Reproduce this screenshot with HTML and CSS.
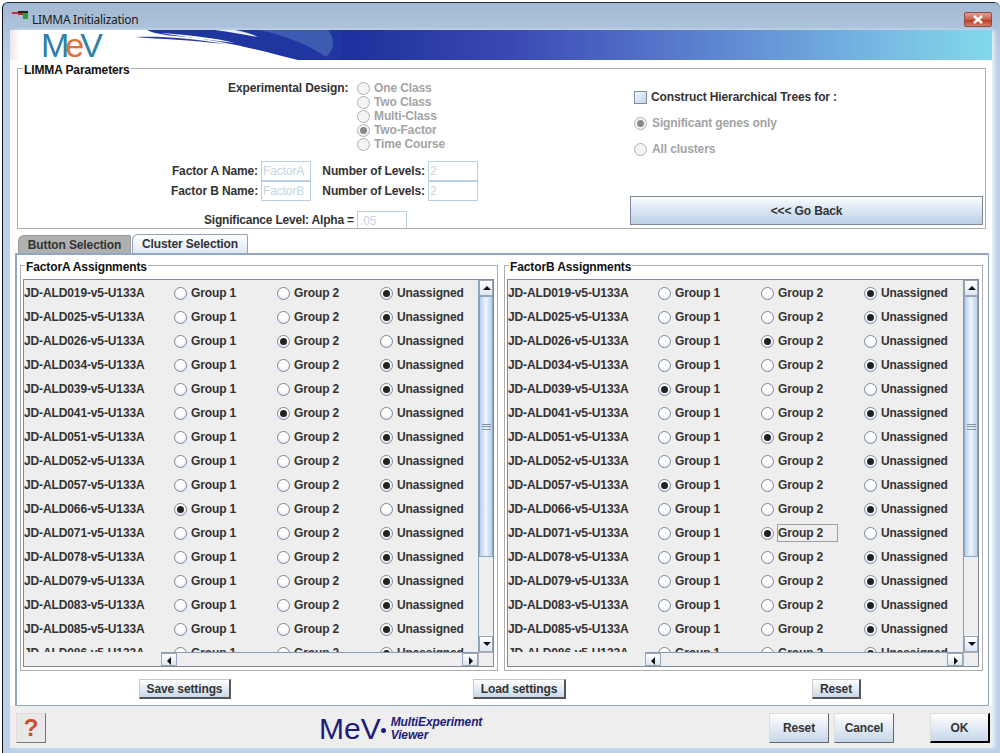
FILE: index.html
```html
<!DOCTYPE html>
<html>
<head>
<meta charset="utf-8">
<title>LIMMA Initialization</title>
<link rel="stylesheet" href="styles.css">
</head>
<body>
<div class="window">
	<div class="titlebar">
		<svg class="appicon" width="17" height="10" viewBox="0 0 17 10"><rect width="6" height="2" y="1" fill="#c0304a"/><rect x="6" y="0" width="10" height="2" fill="#222"/><rect x="6" y="2" width="6" height="2" fill="#a33"/><rect x="11" y="2" width="5" height="6" fill="#2e9a3a"/></svg>
		<span class="title">LIMMA Initialization</span>
		<div class="close"><svg width="12" height="9" viewBox="0 0 12 9"><path d="M2 1l8 7M10 1l-8 7" stroke="#fff" stroke-width="2.4" fill="none"/></svg></div>
	</div>
	<div class="content">
		<div class="banner">
			<svg class="swoosh" width="332" height="30" viewBox="0 0 332 30">
				<path d="M137 0L332 0L332 30L288 30C255 22 215 10 165 6C150 4.5 140 2 137 0Z" fill="#1f36a0"/>
				<path d="M250 0L318 0C326 10 324 20 316 27C298 14 275 6 250 0Z" fill="#4a68b8" opacity=".75"/>
				<path d="M205 0L225 0C235 2 242 4 248 7C235 5 220 2 205 0Z" fill="#e8eefa"/>
				<path d="M150 3C180 5 205 8 225 13C200 10 175 7 150 3Z" fill="#fff"/>
				<path d="M125 7C150 6 180 8 215 14C180 10 150 9 125 7Z" fill="#2a3a90"/>
			</svg>
			<span class="bannerlogo"><span class="mv">M</span><span class="e">e</span><span class="mv">V</span></span>
		</div>
		<div class="main">
			<div class="group params">
				<span class="legend">LIMMA Parameters</span>
				<div class="params-left">
					<div class="design">
						<span class="label design-label">Experimental Design:</span>
						<div class="design-opts">
							<label class="opt off"><i class="radio dis"></i>One Class</label>
							<label class="opt off"><i class="radio dis"></i>Two Class</label>
							<label class="opt off"><i class="radio dis"></i>Multi-Class</label>
							<label class="opt off"><i class="radio dis on"></i>Two-Factor</label>
							<label class="opt off"><i class="radio dis"></i>Time Course</label>
						</div>
					</div>
					<div class="factors">
						<span class="label">Factor A Name:</span><span class="field">FactorA</span>
						<span class="label">Number of Levels:</span><span class="field">2</span>
						<span class="label">Factor B Name:</span><span class="field">FactorB</span>
						<span class="label">Number of Levels:</span><span class="field">2</span>
					</div>
					<div class="alpha">
						<span class="label">Significance Level: Alpha =</span><span class="field">.05</span>
					</div>
				</div>
				<div class="params-right">
					<label class="tree-check"><i class="check"></i>Construct Hierarchical Trees for :</label>
					<label class="opt off tree-opt"><i class="radio dis on"></i>Significant genes only</label>
					<label class="opt off tree-opt"><i class="radio dis"></i>All clusters</label>
					<button class="goback">&lt;&lt;&lt; Go Back</button>
				</div>
			</div>
			<div class="tabs">
				<div class="tab selected">Button Selection</div>
				<div class="tab">Cluster Selection</div>
			</div>
			<div class="tabpanel">
				<div class="assignments">
					<div class="group assign">
						<span class="legend">FactorA Assignments</span>
						<div class="listbox">
							<div class="listmain">
								<div class="rows" id="rowsA"></div>
								<div class="vbar"><div class="sb-btn up"></div><div class="thumb"><span class="grip"></span></div><div class="sb-track"></div><div class="sb-btn down"></div></div>
							</div>
							<div class="hrow">
								<div class="hbar"><div class="sb-btn left"></div><div class="sb-track"></div><div class="sb-btn right"></div></div>
								<div class="corner"></div>
							</div>
						</div>
					</div>
					<div class="group assign">
						<span class="legend">FactorB Assignments</span>
						<div class="listbox">
							<div class="listmain">
								<div class="rows" id="rowsB"></div>
								<div class="vbar"><div class="sb-btn up"></div><div class="thumb"><span class="grip"></span></div><div class="sb-track"></div><div class="sb-btn down"></div></div>
							</div>
							<div class="hrow">
								<div class="hbar"><div class="sb-btn left"></div><div class="sb-track"></div><div class="sb-btn right"></div></div>
								<div class="corner"></div>
							</div>
						</div>
					</div>
				</div>
				<div class="settings">
					<button class="btn save">Save settings</button>
					<button class="btn load">Load settings</button>
					<button class="btn reset-small">Reset</button>
				</div>
			</div>
		</div>
		<div class="footer">
			<button class="help">?</button>
			<div class="mevmark">
				<span class="mevname">MeV</span>
				<span class="mevdot"></span>
				<span class="mevtext">MultiExperiment<br>Viewer</span>
			</div>
			<button class="bigbtn reset">Reset</button>
			<button class="bigbtn cancel">Cancel</button>
			<button class="bigbtn ok">OK</button>
		</div>
	</div>
</div>
<script>
	var samples = ["019","025","026","034","039","041","051","052","057","066","071","078","079","083","085","086"];
	// which column is picked per row: 0 group 1, 1 group 2, 2 unassigned
	var pickA = [2,2,1,2,2,1,2,2,2,0,2,2,2,2,2,2];
	var pickB = [2,2,1,2,0,2,1,2,0,2,1,2,2,2,2,2];
	var names = ["Group 1","Group 2","Unassigned"];

	function fillRows (id, picks, focusRow) {
		var box = document.getElementById(id);
		var html = "";
		for (var i = 0; i < samples.length; i++) {
			html += '<div class="row"><span class="sample">JD-ALD' + samples[i] + '-v5-U133A</span>';
			for (var c = 0; c < 3; c++) {
				var focus = (i == focusRow && c == picks[i]) ? ' focus' : '';
				html += '<label class="cell"><i class="radio' + (picks[i] == c ? ' on' : '') + '"></i><span class="celltext' + focus + '">' + names[c] + '</span></label>';
			}
			html += '</div>';
		}
		box.innerHTML = html;
	}
	fillRows("rowsA", pickA, -1);
	fillRows("rowsB", pickB, 10);
</script>
</body>
</html>
```
FILE: styles.css
```css
* {
	box-sizing: border-box;
	margin: 0;
	padding: 0;
}
html, body {
	width: 1000px;
	height: 753px;
	overflow: hidden;
	background: #fff;
}
body {
	font-family: "Liberation Sans", Arial, sans-serif;
	font-size: 12px;
	font-weight: bold;
	letter-spacing: -0.12px;
	color: #333;
	padding: 2px 0 0 2px;
}
i { display: block; font-style: normal; }
button { font-family: inherit; font-weight: bold; font-size: 12px; letter-spacing: inherit; color: #333; }

.window {
	width: 998px;
	height: 751px;
	border-top: 1px solid #20303f;
	border-left: 1px solid #111;
	border-radius: 6px 6px 0 0;
	background: linear-gradient(#a3b9d3, #bcd1e9 60px);
	display: flex;
	flex-direction: column;
}
.titlebar {
	height: 27px;
	flex: none;
	display: flex;
	align-items: flex-start;
	position: relative;
}
.appicon { margin: 8px 0 0 9px; }
.title {
	font-family: "Noto Sans", sans-serif;
	font-weight: normal;
	font-size: 12px;
	letter-spacing: -0.3px;
	color: #1a1a1a;
	margin: 8px 0 0 3px;
}
.close {
	position: absolute;
	left: 961px;
	top: 9px;
	width: 28px;
	height: 15px;
	border: 1px solid #8c4a48;
	border-radius: 2px;
	background: linear-gradient(#e0a094, #c9604c 50%, #b33c28 55%, #d0806c);
	display: flex;
	align-items: center;
	justify-content: center;
}
.content {
	margin: 0 8px 0 7px;
	flex: none;
	height: 718px;
	background: #eee;
	display: flex;
	flex-direction: column;
	box-shadow: 3px 0 3px rgba(255,255,255,.6);
}
.banner {
	height: 30px;
	flex: none;
	position: relative;
	background: linear-gradient(90deg, #e8e8e8 0, #fff 10px, #fff 330px, #1d2f9c 330px, #3a48b4 500px, #5d84d0 700px, #78bce4 880px, #82d8ea 980px);
}
.swoosh { position: absolute; left: 0; top: 0; }
.bannerlogo {
	position: absolute;
	left: 31px;
	top: 0;
	font-weight: normal;
	font-size: 34px;
	letter-spacing: -4px;
	line-height: 30px;
}
.mv { color: #2f7fa8; }
.e { color: #e2703a; }

.main {
	flex: none;
	background: #fff;
	height: 646px;
	padding: 8px 0 0 5px;
}
.group {
	border: 1px solid #aeaeae;
	position: relative;
}
.legend {
	position: absolute;
	left: 4px;
	top: -6px;
	height: 14px;
	line-height: 14px;
	padding: 0 1px;
	background: #fff;
	color: #111;
}
.params {
	width: 969px;
	margin-left: 2px;
	height: 161px;
	display: flex;
}
.params .legend { left: 5px; }
.params-left {
	width: 612px;
	height: 159px;
	overflow: hidden;
	flex: none;
}
.label { white-space: nowrap; }
.design {
	display: flex;
	padding-top: 12px;
	height: 92px;
}
.design-label { margin-left: 210px; width: 129px; line-height: 14px; }
.opt {
	display: flex;
	align-items: center;
	height: 14px;
}
.off { color: #a3a3a3; }
.radio {
	width: 13px;
	height: 13px;
	border-radius: 50%;
	border: 1px solid #7d8a98;
	background: radial-gradient(circle at 50% 35%, #fff 40%, #d2dff0);
	margin-right: 4px;
	flex: none;
	position: relative;
}
.radio.on::after {
	content: "";
	position: absolute;
	left: 2px;
	top: 2px;
	width: 7px;
	height: 7px;
	border-radius: 50%;
	background: #222;
}
.radio.dis {
	border-color: #b0b0b0;
	background: #f4f4f4;
}
.radio.dis.on::after { background: #8a8a8a; }

.factors {
	display: grid;
	grid-template-columns: 90px 50px 117px 50px;
	grid-auto-rows: 20px;
	margin-left: 153px;
	align-items: center;
}
.factors .label { text-align: right; padding-right: 3px; }
.field {
	height: 20px;
	line-height: 19px;
	border: 1px solid #b8cfe4;
	background: #fff;
	color: #c5d5e4;
	font-weight: normal;
	padding-left: 1px;
	display: block;
}
.alpha {
	display: flex;
	margin-left: 186px;
	margin-top: 10px;
	height: 20px;
	line-height: 19px;
}
.alpha .label { width: 153px; letter-spacing: -0.2px; }
.alpha .field { width: 50px; height: 24px; padding-left: 2px; }
.params-right {
	flex: none;
	width: 355px;
	padding: 21px 0 0 4px;
	display: flex;
	flex-direction: column;
}
.tree-check {
	display: flex;
	align-items: center;
	height: 14px;
	margin-bottom: 12px;
}
.check {
	width: 13px;
	height: 13px;
	border: 1px solid #7a8ea4;
	background: linear-gradient(135deg, #f2f5fa, #c3d4ea);
	margin-right: 4px;
}
.tree-opt { height: 14px; margin-bottom: 12px; }
.tree-opt .radio { margin-right: 5px; }
.goback {
	margin: 28px 0 0 -4px;
	width: 353px;
	height: 29px;
	border: 1px solid #7a8a9a;
	background: linear-gradient(#fff, #e6eef7 30%, #bcd0e6);
}

.tabs {
	display: flex;
	margin: 5px 0 0 3px;
	height: 19px;
	gap: 1px;
	align-items: flex-end;
}
.tab {
	height: 19px;
	width: 116px;
	border: 1px solid #8ea3ba;
	border-bottom: none;
	border-radius: 6px 2px 0 0;
	background: linear-gradient(#fff, #dde7f2);
	line-height: 18px;
	text-align: center;
}
.tab.selected {
	width: 113px;
	height: 18px;
	border-color: #9a9a9a;
	background: #b0b0b0;
}
.tabpanel {
	width: 974px;
	height: 453px;
	border: 1px solid #90a8c4;
	border-width: 2px 1px 1px 2px;
	padding-top: 10px;
	background: #fff;
}
.assignments {
	display: flex;
	gap: 6px;
	padding-left: 3px;
}
.assign { width: 478px; height: 406px; padding: 13px 3px 3px 2px; }
.assign + .assign { width: 479px; }
.listbox {
	height: 388px;
	border: 1px solid #7f8a96;
	background: #eee;
	display: flex;
	flex-direction: column;
}
.listmain { display: flex; height: 372px; }
.rows { flex: 1; overflow: hidden; min-width: 0; padding-top: 1px; }
.row {
	display: flex;
	height: 24px;
	align-items: center;
	white-space: nowrap;
}
.sample { width: 150px; flex: none; }
.cell {
	display: flex;
	align-items: center;
	width: 103px;
	flex: none;
}
.celltext { padding: 0 2px 0 0; border: 1px solid transparent; margin-left: -1px; }
.celltext.focus { border-color: #9aa0a8; width: 61px; height: 18px; line-height: 16px; }

.vbar {
	width: 15px;
	flex: none;
	display: flex;
	flex-direction: column;
	border-left: 1px solid #8a9caf;
}
.sb-btn {
	flex: none;
	background: linear-gradient(#fff, #dbe6f3);
	border: 1px solid #9aa7b6;
	position: relative;
}
.vbar .sb-btn { height: 16px; }
.hbar .sb-btn { width: 16px; }
.sb-btn::after {
	content: "";
	position: absolute;
	width: 0;
	height: 0;
}
.up::after { left: 3px; top: 5px; border: 4px solid transparent; border-top: 0; border-bottom: 4px solid #111; }
.down::after { left: 3px; top: 5px; border: 4px solid transparent; border-bottom: 0; border-top: 4px solid #111; }
.left::after { left: 5px; top: 3px; border: 4px solid transparent; border-left: 0; border-right: 4px solid #111; }
.right::after { left: 6px; top: 3px; border: 4px solid transparent; border-right: 0; border-left: 4px solid #111; }
.thumb {
	height: 261px;
	flex: none;
	border: 1px solid #8ea6c2;
	background: linear-gradient(90deg, #b9d0ec, #eef4fb 50%, #b9d0ec);
	display: flex;
	align-items: center;
	justify-content: center;
}
.grip {
	width: 9px;
	height: 6px;
	border-top: 1px solid #7f94ad;
	border-bottom: 1px solid #7f94ad;
	background: linear-gradient(#7f94ad, #7f94ad) center / 100% 1px no-repeat;
}
.sb-track { flex: 1; background: #eee; }
.hrow { display: flex; height: 14px; }
.hbar {
	margin-left: 137px;
	flex: 1;
	display: flex;
	border-top: 1px solid #8a9caf;
	background: #fff;
}
.corner { width: 15px; border-left: 1px solid #b0b0b0; border-top: 1px solid #b0b0b0; }

.settings {
	display: flex;
	margin-top: 8px;
	height: 20px;
}
.btn {
	height: 20px;
	border: 1px solid #777;
	border-width: 1px 2px 2px 1px;
	border-color: #c8c8c8 #555 #555 #c8c8c8;
	background: linear-gradient(#fff, #c8d8ea);
}
.save { width: 92px; margin-left: 122px; }
.load { width: 93px; margin-left: 242px; }
.reset-small { width: 49px; margin-left: 246px; }

.footer {
	flex: none;
	height: 42px;
	background: #eee;
	display: flex;
	align-items: flex-start;
}
.help {
	width: 30px;
	height: 30px;
	margin: 7px 0 0 6px;
	border: 1px solid;
	border-color: #ddd #777 #777 #ddd;
	background: #e8e8e8;
	color: #c8502a;
	font-size: 24px;
	line-height: 26px;
}
.mevmark {
	display: flex;
	align-items: center;
	margin: 6px 0 0 273px;
	color: #1c1c78;
}
.mevname { font-weight: normal; font-size: 30px; line-height: 34px; letter-spacing: 0; }
.mevdot { width: 5px; height: 5px; margin: 2px 5px 0 0; background: #1c1c78; border-radius: 50%; }
.mevtext { font-style: italic; font-size: 12px; line-height: 13px; }
.bigbtn {
	height: 30px;
	margin-top: 7px;
	border: 1px solid;
	border-color: #ddd #666 #666 #ddd;
	background: linear-gradient(#fff, #c6d6e9);
}
.reset { width: 60px; margin-left: auto; }
.cancel { width: 60px; margin-left: 5px; }
.ok { width: 60px; margin: 7px 2px 0 36px; border-width: 1px 2px 2px 1px; border-color: #ddd #000 #000 #ddd; }
```
